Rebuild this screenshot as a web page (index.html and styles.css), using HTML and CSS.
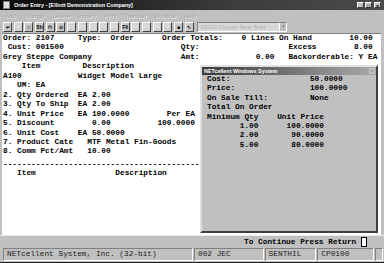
FILE: index.html
```html
<!DOCTYPE html>
<html lang="en">
<head>
    <meta charset="UTF-8">
    <title>Order Entry</title>
    <link rel="stylesheet" href="styles.css">
</head>
<body>

<div class="window">
    <div class="titlebar">
        <span class="app-icon"></span>
        <span class="title">Order Entry - [Elliott Demonstration Company]</span>
        <div class="winbtns"><span>_</span><span>&#9633;</span><span>&#215;</span></div>
    </div>

    <div class="menubar">
        <span>Add</span><span>Change</span><span>Delete</span><span>Inquiry</span><span>Print</span><span>Transfer</span><span>Window</span><span>Help</span>
    </div>

    <div class="toolbar">
        <span class="tb">&#8629;</span>
        <span class="tb faded">X</span>
        <span class="tb">&#9633;</span>
        <span class="tb">Sh</span>
        <span class="tb">&#8851;</span>
        <span class="tb">&#8857;</span>
        <span class="tb faded">F1</span>
        <span class="tb faded">F2</span>
        <span class="tb faded">F3</span>
        <span class="tb faded">F4</span>
        <span class="tb faded">F5</span>
        <span class="tb">F6</span>
        <span class="tb faded">F7</span>
        <span class="tb faded">F8</span>
        <span class="tb faded">F9</span>
        <span class="tb faded">?</span>
        <span class="tb">&#9632;</span>
        <span class="tb">&#8598;</span>
        <div class="combo">
            <span class="combo-text">10x20 Courier New Bold</span>
            <span class="combo-arrow">&#9662;</span>
        </div>
    </div>

    <div class="screen">
        <div class="term">
            <div class="row">Order: 2107     Type:  Order      Order Totals:    0 Lines On Hand        10.00</div>
            <div class="row"> Cust: 001500                         Qty:                   Excess        8.00</div>
            <div class="row">Grey Steppe Company                   Amt:            0.00   Backorderable: Y EA</div>
            <div class="row">    Item         Description</div>
            <div class="row">A100            Widget Model Large</div>
            <div class="row">   UM: EA</div>
            <div class="row">2. Qty Ordered  EA 2.00</div>
            <div class="row">3. Qty To Ship  EA 2.00</div>
            <div class="row">4. Unit Price   EA 100.0000        Per EA</div>
            <div class="row">5. Discount        0.00          100.0000</div>
            <div class="row">6. Unit Cost    EA 50.0000</div>
            <div class="row">7. Product Cate   MTF Metal Fin-Goods</div>
            <div class="row">8. Comm Pct/Amt   10.00</div>
            <div class="row rule">------------------------------------------</div>
            <div class="row">   Item                 Description</div>
        </div>

        <div class="popup">
            <div class="popup-title">
                <span>NETcellent Windows System</span>
                <span class="popup-close">&#215;</span>
            </div>
            <div class="popup-body">
                <div class="row">Cost:                 50.0000</div>
                <div class="row">Price:                100.0000</div>
                <div class="row">On Sale Till:         None</div>
                <div class="row">Total On Order</div>
                <div class="row">Minimum Qty    Unit Price</div>
                <div class="row">       1.00      100.0000</div>
                <div class="row">       2.00       90.0000</div>
                <div class="row">       5.00       80.0000</div>
            </div>
        </div>
    </div>

    <div class="msgline">
        <span>To Continue Press Return</span>
        <span class="cursor"></span>
    </div>

    <div class="statusbar">
        <span class="panel p1">NETcellent System, Inc. (32-bit)</span>
        <span class="panel p2">002 JEC</span>
        <span class="panel p3">SENTHIL</span>
        <span class="panel p4">CP0100</span>
        <span class="panel grip"></span>
    </div>
</div>

</body>
</html>
```

FILE: styles.css
```css
body {
    margin: 0;
    background: #c0c0c0;
}
.window {
    width: 384px;
    height: 263px;
    display: flex;
    flex-direction: column;
    background: #c0c0c0;
    overflow: hidden;
    box-sizing: border-box;
    border-bottom: 1px solid #202020;
}
.titlebar {
    height: 10px;
    flex: none;
    display: flex;
    align-items: center;
    padding: 0 3px;
    background: linear-gradient(90deg, #0a0a0a, #3c3c3c 60%, #4a4a4a);
    color: #fff;
    font: bold 5.4px "Liberation Sans", Arial, sans-serif;
}
.app-icon {
    width: 5px;
    height: 6px;
    background: #e0e0e0;
    border: 1px solid #808080;
    margin-right: 4px;
}
.title {
    flex: 1;
    white-space: nowrap;
}
.winbtns {
    display: flex;
    gap: 1px;
}
.winbtns span {
    width: 7px;
    height: 6px;
    background: #c0c0c0;
    color: #000;
    font: bold 5px "Liberation Sans", sans-serif;
    line-height: 6px;
    text-align: center;
    border: 1px solid;
    border-color: #fff #404040 #404040 #fff;
    box-sizing: border-box;
}
.winbtns span:last-child {
    margin-left: 1px;
}
.menubar {
    height: 11px;
    flex: none;
    display: flex;
    align-items: center;
    gap: 8px;
    padding-left: 5px;
    font: 6px "Liberation Sans", Arial, sans-serif;
    color: #a4a4a4;
    text-shadow: 1px 1px 0 #e8e8e8;
}
.toolbar {
    height: 12px;
    flex: none;
    display: flex;
    align-items: center;
    gap: 1.7px;
    padding-left: 3px;
}
.tb {
    width: 9px;
    height: 10px;
    box-sizing: border-box;
    border: 1px solid;
    border-color: #fff #404040 #404040 #fff;
    background: #c8c8c8;
    font: bold 5px "Liberation Sans", sans-serif;
    display: flex;
    align-items: center;
    justify-content: center;
    color: #000;
    overflow: hidden;
}
.tb.faded {
    color: #e8e8e8;
    background: #d0d0d0;
}
.combo {
    margin-left: 2px;
    width: 90px;
    height: 10px;
    display: flex;
    background: #d8d8d8;
    border: 1px solid;
    border-color: #808080 #fff #fff #808080;
    box-sizing: border-box;
}
.combo-text {
    flex: 1;
    font: 6px "Liberation Sans", sans-serif;
    color: #b0b0b0;
    line-height: 8px;
    padding-left: 2px;
    white-space: nowrap;
}
.combo-arrow {
    width: 6px;
    background: #c0c0c0;
    border-left: 1px solid #fff;
    font-size: 5px;
    line-height: 8px;
    text-align: center;
    color: #808080;
}
.screen {
    flex: 1;
    position: relative;
    margin: 0 3px 0 2px;
    background: #fff;
    border-top: 1px solid #808080;
}
.row {
    white-space: pre;
    width: max-content;
}
.term {
    font: bold 7.8px "Liberation Mono", "Courier New", monospace;
    line-height: 9.45px;
    padding-left: 1px;
    color: #000;
}
.term .rule {
    margin-top: 3px;
}
.popup {
    position: absolute;
    left: 198px;
    top: 31px;
    width: 178px;
    height: 168px;
    box-sizing: border-box;
    background: #c0c0c0;
    border: 2px solid;
    border-color: #e0e0e0 #404040 #404040 #e0e0e0;
}
.popup-title {
    height: 8px;
    display: flex;
    align-items: center;
    justify-content: space-between;
    padding-left: 2px;
    background: linear-gradient(90deg, #3a3a3a, #8a8a8a 70%, #a8a8a8);
    color: #fff;
    font: bold 5.4px "Liberation Sans", Arial, sans-serif;
}
.popup-close {
    width: 6px;
    height: 6px;
    margin-right: 1px;
    background: #c0c0c0;
    color: #808080;
    font-size: 5px;
    line-height: 6px;
    text-align: center;
}
.popup-body {
    padding-left: 5px;
    font: bold 7.8px "Liberation Mono", "Courier New", monospace;
    line-height: 9.4px;
    color: #000;
}
.msgline {
    height: 12px;
    flex: none;
    display: flex;
    align-items: center;
    padding-left: 244px;
    font: bold 7.8px "Liberation Mono", "Courier New", monospace;
    border-top: 1px solid #e8e8e8;
}
.cursor {
    width: 4px;
    height: 8px;
    margin-left: 5px;
    background: #fff;
    border: 1px solid #000;
}
.statusbar {
    height: 13px;
    flex: none;
    display: flex;
    gap: 1px;
    padding: 0 1px 1px 3px;
    font: 7.8px "Liberation Mono", "Courier New", monospace;
    color: #202020;
}
.panel {
    border: 1px solid;
    border-color: #808080 #fff #fff #808080;
    line-height: 11px;
    padding-left: 3px;
    box-sizing: border-box;
    white-space: nowrap;
}
.p1 { width: 191px; }
.p2 { width: 70px; }
.p3 { width: 52px; }
.p4 { width: 57px; }
.grip { width: 8px; padding: 0; }
```
